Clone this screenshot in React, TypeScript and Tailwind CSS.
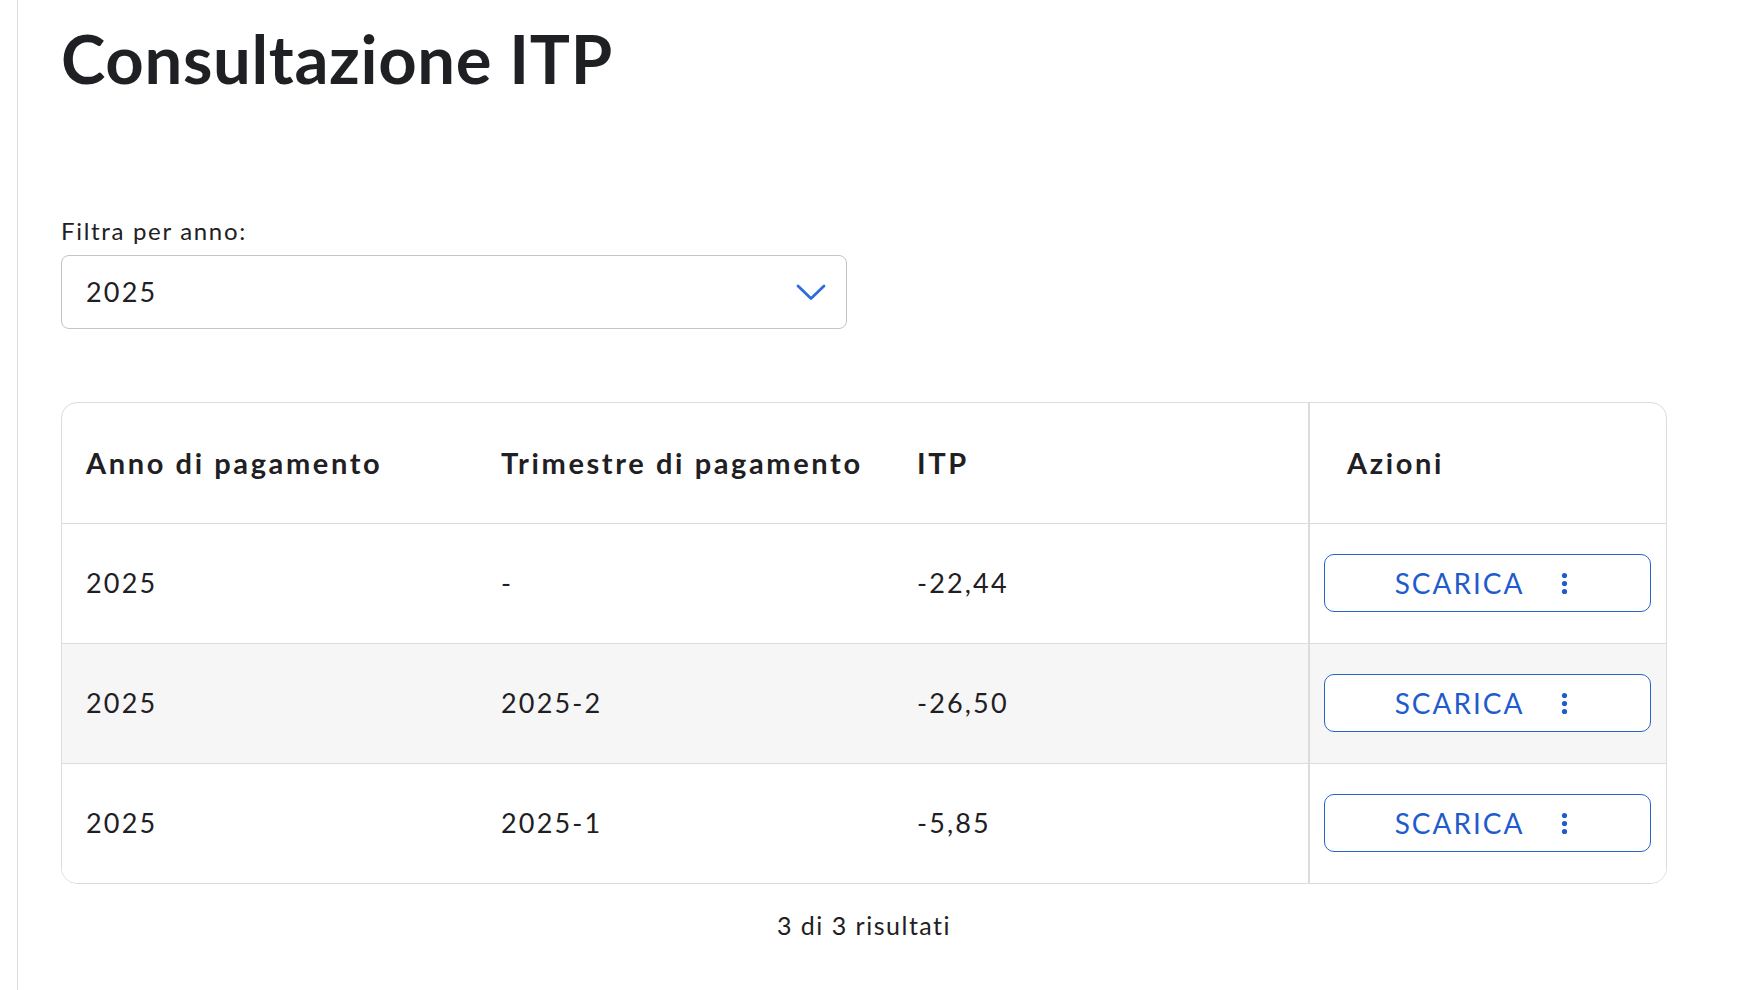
type Row = { anno: string; trimestre: string; itp: string };

const rows: Row[] = [
  { anno: "2025", trimestre: "-", itp: "-22,44" },
  { anno: "2025", trimestre: "2025-2", itp: "-26,50" },
  { anno: "2025", trimestre: "2025-1", itp: "-5,85" },
];

function DotsIcon() {
  return (
    <svg width="7" height="23" viewBox="0 0 7 23" className="fill-[#1f5bcc]">
      <circle cx="3.5" cy="3.5" r="2.6" />
      <circle cx="3.5" cy="11.5" r="2.6" />
      <circle cx="3.5" cy="19.5" r="2.6" />
    </svg>
  );
}

function Chevron() {
  return (
    <svg width="30" height="17" viewBox="0 0 30 17" fill="none">
      <polyline points="2,2 15,14.5 28,2" stroke="#2b6ddb" strokeWidth="2.8" strokeLinecap="round" strokeLinejoin="round" />
    </svg>
  );
}

export default function App() {
  return (
    <div className="min-h-[990px] w-[1752px] bg-white font-['Lato','Noto_Sans',sans-serif] text-[#1f2023]">
      <div className="ml-[17px] min-h-[990px] border-l border-[#dcdcdc] pl-[43px] pr-[86px]">
        <h1 className="pt-[18px] text-[67px] font-bold leading-[80px] tracking-[0.01em]">Consultazione ITP</h1>

        <div className="mt-[119px]">
          <label className="block text-[24px] leading-[28px] tracking-[0.07em]">Filtra per anno:</label>
          <div className="mt-[10px] flex h-[74px] w-[786px] items-center justify-between rounded-[8px] border border-[#c4c4c4] pl-[24px] pr-[20px]">
            <span className="text-[27px] tracking-[0.08em]">2025</span>
            <Chevron />
          </div>
        </div>

        <div className="mt-[73px] w-[1606px] overflow-hidden rounded-[16px] border border-[#dcdcdc]">
          <table className="w-full border-collapse text-left">
            <thead>
              <tr className="h-[120px] border-b border-[#dcdcdc]">
                <th className="w-[415px] pl-[24px] text-[29px] font-bold tracking-[0.09em]">Anno di pagamento</th>
                <th className="w-[416px] pl-[24px] text-[29px] font-bold tracking-[0.09em]">Trimestre di pagamento</th>
                <th className="w-[416px] pl-[24px] text-[29px] font-bold tracking-[0.09em]">ITP</th>
                <th className="border-l-2 border-[#dcdcdc] pl-[37px] text-[29px] font-bold tracking-[0.09em]">Azioni</th>
              </tr>
            </thead>
            <tbody>
              {rows.map((r, i) => (
                <tr
                  key={i}
                  className={
                    (i === 1 ? "bg-[#f6f6f6] " : "bg-white ") +
                    (i < rows.length - 1 ? "h-[120px] border-b border-[#dcdcdc]" : "h-[120px]")
                  }
                >
                  <td className="pl-[24px] text-[27px] tracking-[0.08em]">{r.anno}</td>
                  <td className="pl-[24px] text-[27px] tracking-[0.08em]">{r.trimestre}</td>
                  <td className="pl-[24px] text-[27px] tracking-[0.08em]">{r.itp}</td>
                  <td className="border-l-2 border-[#dcdcdc] pl-[14px]">
                    <button
                      type="button"
                      className="flex h-[58px] w-[327px] items-center justify-center gap-[37px] rounded-[10px] border border-[#2a62c9] bg-white pr-[12px] text-[28px] tracking-[0.07em] text-[#1f5bcc]"
                    >
                      <span>SCARICA</span>
                      <DotsIcon />
                    </button>
                  </td>
                </tr>
              ))}
            </tbody>
          </table>
        </div>

        <p className="mt-[23px] w-[1606px] text-center text-[25px] tracking-[0.06em]">3 di 3 risultati</p>
      </div>
    </div>
  );
}
